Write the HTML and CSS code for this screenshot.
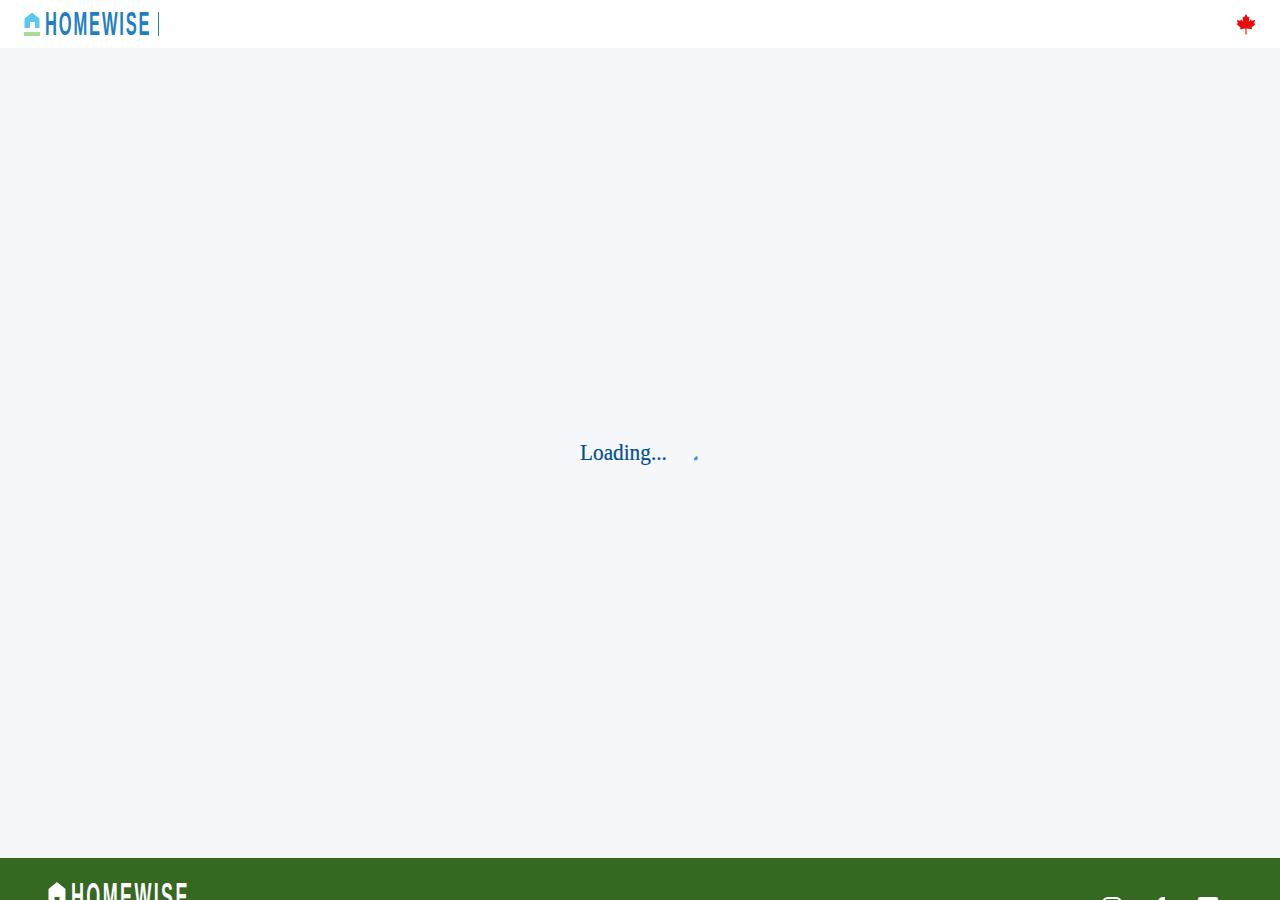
FILE: index.html
```html
<html>
<head>
	<meta charset="UTF-8">
	<title>Homewise</title>
	<link rel="stylesheet" href="styles.css">
</head>
<body>
	<header class="topBar">
		<div class="brand">
			<svg class="brandIcon" width="16" height="24" viewBox="0 0 16 24">
				<path fill="#5cc8ee" d="M8 0.500 L15.500 6.500 V16 H11 V10 H6 V16 H0.500 V6.500 Z"/>
				<rect y="20" width="16" height="4" fill="#a6dc94"/>
			</svg>
			<span class="brandName">HOMEWISE</span>
		</div>
		<svg class="flag" width="20" height="21" viewBox="0 0 20 22">
			<path fill="#ea0b0b" d="M10 0 L12 3.500 L13.500 2.800 L13 8 L15.300 5.600 L16 7 L19.500 6.400 L18.500 9.800 L20 10.600 L15.800 14.200 L16.300 16 L10.600 15.300 V21.500 H9.400 V15.300 L3.700 16 L4.200 14.200 L0 10.600 L1.500 9.800 L0.500 6.400 L4 7 L4.700 5.600 L7 8 L6.500 2.800 L8 3.500 Z"/>
		</svg>
	</header>

	<main class="content">
		<div class="loader">
			<span class="loadingText">Loading...</span>
			<svg class="spinner" width="20" height="20" viewBox="0 0 20 20">
				<path d="M14 15.500 L16.500 13 L18 14.500 L17 17 L14.500 17.500 Z" fill="#3f8fdc"/>
			</svg>
		</div>
	</main>

	<footer class="footer">
		<div class="footerBrand">
			<svg width="18" height="24" viewBox="0 0 18 24">
				<path fill="#fff" d="M9 0 L17.500 7 V24 H11.500 V15 H6.500 V24 H0.500 V7 Z"/>
			</svg>
			<span class="footerName">HOMEWISE</span>
		</div>
		<div class="social">
			<svg width="20" height="20" viewBox="0 0 20 20" fill="none" stroke="#fff" stroke-width="2">
				<rect x="1" y="1" width="18" height="18" rx="5"/>
				<circle cx="10" cy="10" r="4"/>
			</svg>
			<svg width="20" height="20" viewBox="0 0 20 20">
				<path fill="#fff" d="M8 20 V11 H5 V7.500 H8 V5 C8 2 10 0 13 0 H15 V3.500 H13.500 C12 3.500 11.800 4.200 11.800 5.200 V7.500 H15 L14.500 11 H11.800 V20 Z"/>
			</svg>
			<svg width="20" height="20" viewBox="0 0 20 20">
				<rect width="20" height="20" rx="2" fill="#fff"/>
			</svg>
		</div>
	</footer>
</body>
</html>
```
FILE: styles.css
```css
html, body {
	margin: 0;
	height: 900px;
	overflow: hidden;
}
body {
	background-color: #f5f7fb;
	font-family: "Liberation Serif", serif;
}
.topBar {
	height: 48px;
	background-color: white;
	display: flex;
	align-items: center;
	justify-content: space-between;
	padding: 0 24px;
	box-sizing: border-box;
}
.brand {
	display: flex;
	align-items: center;
	height: 24px;
	border-right: 1px solid #1f7fc4;
	padding-right: 8px;
}
.brandIcon {
	margin-right: 5px;
}
.brandName, .footerName {
	display: block;
	font-family: "Liberation Sans", sans-serif;
	font-weight: bold;
	white-space: nowrap;
	transform-origin: left center;
}
.brandName {
	color: #1f7fc4;
	font-size: 33px;
	line-height: 24px;
	letter-spacing: 3.700px;
	width: 105px;
	transform: scaleX(0.5);
}
.content {
	height: 810px;
	display: flex;
	align-items: center;
	justify-content: center;
}
.loader {
	display: flex;
	align-items: center;
	gap: 13px;
}
.loadingText {
	color: #00508f;
	font-size: 23px;
	-webkit-text-stroke: 0.2px #00508f;
	width: 87px;
	white-space: nowrap;
	transform: scaleX(0.925);
	transform-origin: left center;
}
.footer {
	height: 120px;
	background-color: #356821;
	display: flex;
	justify-content: space-between;
	padding: 24px 62px 0 48px;
	box-sizing: border-box;
}
.footerBrand {
	display: flex;
	align-items: flex-start;
	gap: 5px;
	height: 40px;
}
.footerName {
	color: white;
	font-size: 36px;
	line-height: 30px;
	letter-spacing: 4.700px;
	width: 117px;
	transform: scaleX(0.5);
}
.social {
	display: flex;
	gap: 28px;
	padding-top: 15px;
}
```
